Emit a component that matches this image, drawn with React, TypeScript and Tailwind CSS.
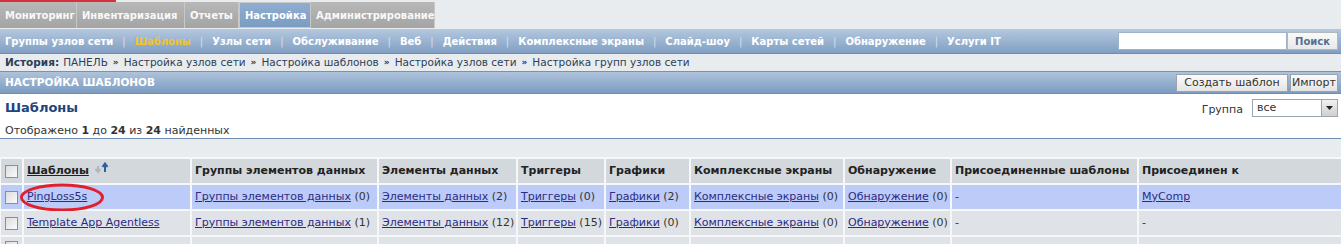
import React from 'react';

const tabs = ['Мониторинг', 'Инвентаризация', 'Отчеты', 'Настройка', 'Администрирование'];
const tabWidths = ['w-[77px]', 'w-[108px]', 'w-[54px]', 'w-[72px]', 'w-[124px]'];

const subNav = [
    'Группы узлов сети', 'Шаблоны', 'Узлы сети', 'Обслуживание', 'Веб', 'Действия',
    'Комплексные экраны', 'Слайд-шоу', 'Карты сетей', 'Обнаружение', 'Услуги IT',
];

const columns = [
    'Группы элементов данных', 'Элементы данных', 'Триггеры', 'Графики',
    'Комплексные экраны', 'Обнаружение', 'Присоединенные шаблоны', 'Присоединен к',
];

const rows = [
    {
        name: 'PingLoss5s', hl: true,
        cells: [['Группы элементов данных', '(0)'], ['Элементы данных', '(2)'], ['Триггеры', '(0)'], ['Графики', '(2)'], ['Комплексные экраны', '(0)'], ['Обнаружение', '(0)']],
        linked: '-', host: 'MyComp',
    },
    {
        name: 'Template App Agentless', hl: false,
        cells: [['Группы элементов данных', '(1)'], ['Элементы данных', '(12)'], ['Триггеры', '(15)'], ['Графики', '(0)'], ['Комплексные экраны', '(0)'], ['Обнаружение', '(0)']],
        linked: '-', host: '-',
    },
];

const grid = 'grid grid-cols-[21px_166px_185px_137px_86px_83px_152px_105px_185px_1fr] gap-[2px]';

const Checkbox = () => (
    <span className="block w-[13px] h-[13px] border border-[#8a8f94] bg-gradient-to-br from-[#dcdcdc] to-[#fbfbfb]" />
);

const SortIcon = () => (
    <svg width="16" height="12" viewBox="0 0 16 12" className="ml-[5px] -mt-[7px]">
        <path d="M4 4v5M1.5 7 4 10 6.5 7" stroke="#b4b8bc" strokeWidth="2" fill="none" />
        <path d="M11 10V3M8.5 5 11 1.5 13.5 5" stroke="#2f5f9f" strokeWidth="2" fill="none" />
    </svg>
);

const Link = ({ text }: { text: string }) => (
    <span className="underline text-[#2b2b86]">{text}</span>
);

const Sep = () => <span className="mx-[5px] text-[9px] font-bold">»</span>;

export default function App() {
    return (
        <div className="w-[1341px] h-[244px] overflow-hidden bg-[#e9ecef] text-[11px] text-[#333] font-['DejaVu_Sans',sans-serif]">
            {/* top tabs */}
            <div className="h-[2px] w-[116px] bg-[#d8303a]" />
            <div className="flex h-[26px]">
                {tabs.map((t, i) => (
                    <div
                        key={t}
                        className={`${tabWidths[i]} flex items-center px-[5px] text-[10px] font-bold whitespace-nowrap border-r border-[#c8c8c8] ${
                            t === 'Настройка'
                                ? 'bg-gradient-to-b from-[#8fadcf] to-[#7b9cc2] border border-[#5e80a9] text-white'
                                : 'bg-gradient-to-b from-[#b8b8b8] to-[#a4a4a4] text-[#f8f8f8]'
                        }`}
                    >
                        {t}
                    </div>
                ))}
            </div>

            {/* sub nav */}
            <div className="h-[25px] mt-[1px] flex items-center border-b border-[#6d8db3] bg-gradient-to-b from-[#b4c8de] to-[#819fc3]">
                <div className="flex items-center pl-[5px] text-[10px] font-bold text-white whitespace-nowrap">
                    {subNav.map((s, i) => (
                        <React.Fragment key={s}>
                            {i > 0 && <span className="px-[9px] font-normal text-[#d6e0ec]">|</span>}
                            <span className={s === 'Шаблоны' ? 'text-[#f3c32a]' : ''}>{s}</span>
                        </React.Fragment>
                    ))}
                </div>
                <div className="ml-auto mr-[3px] flex items-center">
                    <div className="w-[169px] h-[18px] bg-white border border-[#9fb3cb]" />
                    <button className="w-[51px] h-[18px] bg-gradient-to-b from-[#fafafa] to-[#e8e8e8] border border-[#b0b8c0] font-bold text-[#55708f] text-[10px]">
                        Поиск
                    </button>
                </div>
            </div>

            {/* history */}
            <div className="h-[17px] flex items-center px-[5px] text-[10.5px] text-[#2d3e55] whitespace-nowrap">
                <span className="font-bold mr-[4px]">История:</span>
                ПАНЕЛЬ <Sep /> Настройка узлов сети <Sep /> Настройка шаблонов <Sep /> Настройка узлов сети <Sep /> Настройка групп узлов сети
            </div>

            {/* page header */}
            <div className="h-[22px] flex items-center border-t border-[#7394ba] bg-gradient-to-b from-[#aec3db] to-[#7c9cc1] pl-[5px] pr-[3px]">
                <span className="font-bold text-[10.5px] text-white uppercase">Настройка шаблонов</span>
                <div className="ml-auto flex gap-[2px]">
                    <button className="h-[18px] w-[112px] bg-gradient-to-b from-[#fbfbfb] to-[#e4e4e4] border border-[#9aa4ae] text-[11px] text-[#333] whitespace-nowrap">
                        Создать шаблон
                    </button>
                    <button className="h-[18px] w-[48px] bg-gradient-to-b from-[#fbfbfb] to-[#e4e4e4] border border-[#9aa4ae] text-[11px] text-[#333]">
                        Импорт
                    </button>
                </div>
            </div>

            {/* title section */}
            <div className="h-[46px] bg-white border-t border-b border-[#6d8db3] flex px-[5px]">
                <div className="flex flex-col pt-[4px]">
                    <span className="font-bold text-[13px] text-[#24437a]">Шаблоны</span>
                    <span className="mt-[5px]">
                        Отображено <b>1</b> до <b>24</b> из <b>24</b> найденных
                    </span>
                </div>
                <div className="ml-auto flex items-start pt-[5px] -mr-[2px]">
                    <span className="mt-[3px] mr-[9px]">Группа</span>
                    <div className="w-[86px] h-[18px] border border-[#9ca6b0] bg-white flex items-center justify-between pl-[4px]">
                        <span>все</span>
                        <span className="w-[16px] h-[16px] bg-gradient-to-b from-[#f2f2f2] to-[#cfcfcf] border-l border-[#9ca6b0] flex items-center justify-center">
                            <svg width="7" height="4" viewBox="0 0 7 4"><path d="M0 0h7L3.5 4z" fill="#222" /></svg>
                        </span>
                    </div>
                </div>
            </div>

            <div className="h-[18px]" />

            {/* table */}
            <div className={`${grid} bg-[#f6f7f8] pt-[2px] pl-[1px] auto-rows-[24px]`}>
                <div className="bg-[#d3d8dd] flex items-center justify-center"><Checkbox /></div>
                <div className="bg-[#d3d8dd] flex items-center px-[3px] font-bold text-[#222]">
                    <span className="underline">Шаблоны</span>
                    <SortIcon />
                </div>
                {columns.map(c => (
                    <div key={c} className="bg-[#d3d8dd] flex items-center px-[3px] font-bold text-[#222] whitespace-nowrap">{c}</div>
                ))}

                {rows.map(r => {
                    const bg = r.hl ? 'bg-[#bccbf7]' : 'bg-[#dfe3e7]';
                    return (
                        <React.Fragment key={r.name}>
                            <div className={`${bg} flex items-center justify-center`}><Checkbox /></div>
                            <div className={`${bg} relative flex items-center px-[3px]`}>
                                <Link text={r.name} />
                                {r.hl && (
                                    <svg className="absolute left-[-5px] top-[-2px]" width="86" height="29" viewBox="0 0 86 29">
                                        <ellipse cx="43" cy="14.5" rx="40.5" ry="12.5" fill="none" stroke="#e0202c" strokeWidth="3" />
                                    </svg>
                                )}
                            </div>
                            {r.cells.map(([l, n], i) => (
                                <div key={i} className={`${bg} flex items-center px-[3px] whitespace-nowrap`}>
                                    <Link text={l} />&nbsp;{n}
                                </div>
                            ))}
                            <div className={`${bg} flex items-center px-[3px]`}>{r.linked}</div>
                            <div className={`${bg} flex items-center px-[3px]`}>
                                {r.host === '-' ? '-' : <Link text={r.host} />}
                            </div>
                        </React.Fragment>
                    );
                })}

                <div className="bg-[#dfe3e7] flex items-start justify-center pt-[4px]"><Checkbox /></div>
                {Array.from({ length: 9 }).map((_, i) => (
                    <div key={i} className="bg-[#dfe3e7]" />
                ))}
            </div>
        </div>
    );
}
